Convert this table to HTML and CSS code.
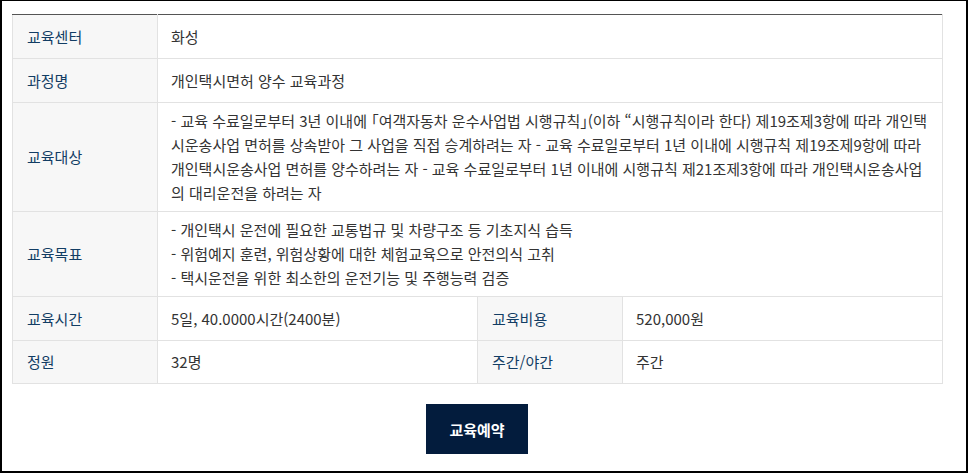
FILE: index.html
```html
<!DOCTYPE html>
<html lang="ko">
<head>
<meta charset="utf-8">
<title>교육과정</title>
<link rel="stylesheet" href="styles.css">
</head>
<body>
<div class="frame">
  <table class="info">
    <colgroup>
      <col class="c-th"><col class="c-td"><col class="c-th"><col class="c-td">
    </colgroup>
    <tr><th>교육센터</th><td colspan="3">화성</td></tr>
    <tr><th>과정명</th><td colspan="3">개인택시면허 양수 교육과정</td></tr>
    <tr><th>교육대상</th><td colspan="3" class="multi half">- 교육 수료일로부터 3년 이내에 「여객자동차 운수사업법 시행규칙」(이하 “시행규칙이라 한다) 제19조제3항에 따라 개인택시운송사업 면허를 상속받아 그 사업을 직접 승계하려는 자 - 교육 수료일로부터 1년 이내에 시행규칙 제19조제9항에 따라 개인택시운송사업 면허를 양수하려는 자 - 교육 수료일로부터 1년 이내에 시행규칙 제21조제3항에 따라 개인택시운송사업의 대리운전을 하려는 자</td></tr>
    <tr><th>교육목표</th><td colspan="3" class="multi">- 개인택시 운전에 필요한 교통법규 및 차량구조 등 기초지식 습득<br>- 위험예지 훈련, 위험상황에 대한 체험교육으로 안전의식 고취<br>- 택시운전을 위한 최소한의 운전기능 및 주행능력 검증</td></tr>
    <tr><th>교육시간</th><td>5일, 40.0000시간(2400분)</td><th>교육비용</th><td>520,000원</td></tr>
    <tr><th>정원</th><td>32명</td><th>주간/야간</th><td>주간</td></tr>
  </table>
  <div class="actions">
    <button class="btn" type="button">교육예약</button>
  </div>
</div>
</body>
</html>
```

FILE: styles.css
```css
html, body {
  margin: 0;
  padding: 0;
  background: #fff;
}
.frame {
  box-sizing: border-box;
  width: 968px;
  height: 473px;
  border: 2px solid #000;
  border-top-width: 1px;
  padding: 13px 0 0 10px;
  font-family: "Noto Sans CJK KR", "Noto Sans", sans-serif;
  font-size: 15px;
  color: #333;
}
.info {
  width: 930px;
  border-collapse: collapse;
  table-layout: fixed;
}
.c-th { width: 145px; }
.c-td { width: 320px; }
.info tr { height: 44px; }
.info tr:last-child { height: 43px; }
.info th, .info td {
  border: 1px solid #e2e2e2;
  padding: 9px 13px;
  line-height: 24px;
  text-align: left;
  vertical-align: middle;
  font-weight: 400;
}
.info tr:first-child th, .info tr:first-child td {
  border-top: 1px solid #555;
}
.info th {
  background: #f7f7f7;
  color: #123d64;
  padding-left: 14px;
}
.info td.multi {
  padding-top: 6px;
  padding-bottom: 6px;
}
.half {
  font-feature-settings: "halt";
}
.actions {
  display: flex;
  justify-content: center;
  width: 930px;
  padding-top: 20px;
}
.btn {
  font-family: "Noto Sans CJK KR", "Noto Sans", sans-serif;
  font-size: 15px;
  font-weight: 700;
  color: #fff;
  background: #031c3d;
  border: 0;
  width: 102px;
  height: 50px;
  padding: 0;
  cursor: pointer;
}
```
